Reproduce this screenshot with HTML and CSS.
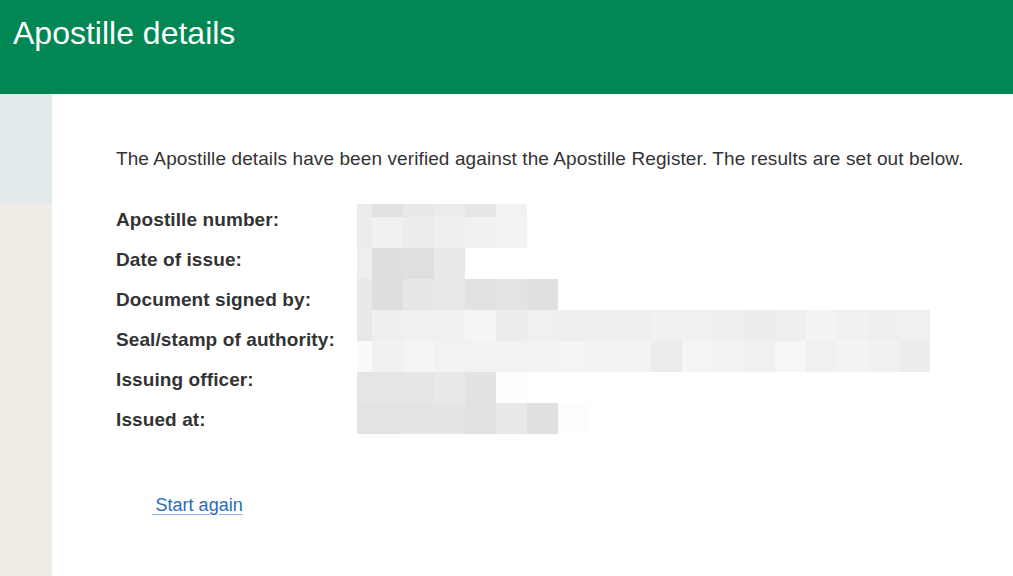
FILE: index.html
```html
<!DOCTYPE html>
<html lang="en">
<head>
<meta charset="utf-8">
<title>Apostille details</title>
<link rel="stylesheet" href="styles.css">
</head>
<body>
<header class="site-header">
  <h1 class="site-title">Apostille details</h1>
</header>
<div class="page">
  <aside class="sidebar">
    <div class="sidebar-top"></div>
  </aside>
  <main class="main">
    <p class="intro">The Apostille details have been verified against the Apostille Register. The results are set out below.</p>
    <dl class="details">
      <dt>Apostille number:</dt><dd></dd>
      <dt>Date of issue:</dt><dd></dd>
      <dt>Document signed by:</dt><dd></dd>
      <dt>Seal/stamp of authority:</dt><dd></dd>
      <dt>Issuing officer:</dt><dd></dd>
      <dt>Issued at:</dt><dd></dd>
      <svg class="redaction" width="573" height="230" viewBox="0 0 573 230" aria-hidden="true">
        <g>
          <rect x="0" y="0" width="15" height="13" fill="#ececec"/>
          <rect x="15" y="0" width="31" height="13" fill="#e2e2e2"/>
          <rect x="46" y="0" width="31" height="13" fill="#e8e8e8"/>
          <rect x="77" y="0" width="31" height="13" fill="#ececec"/>
          <rect x="108" y="0" width="31" height="13" fill="#e6e6e6"/>
          <rect x="139" y="0" width="31" height="13" fill="#f2f2f2"/>
        </g>
        <g>
          <rect x="0" y="13" width="15" height="31" fill="#ececec"/>
          <rect x="15" y="13" width="31" height="31" fill="#f1f1f1"/>
          <rect x="46" y="13" width="31" height="31" fill="#ececec"/>
          <rect x="77" y="13" width="31" height="31" fill="#efefef"/>
          <rect x="108" y="13" width="31" height="31" fill="#f1f1f1"/>
          <rect x="139" y="13" width="31" height="31" fill="#f3f3f3"/>
        </g>
        <g>
          <rect x="0" y="44" width="15" height="31" fill="#efeeec"/>
          <rect x="15" y="44" width="31" height="31" fill="#dedede"/>
          <rect x="46" y="44" width="31" height="31" fill="#dfdfdf"/>
          <rect x="77" y="44" width="31" height="31" fill="#e9e9e9"/>
        </g>
        <g>
          <rect x="0" y="75" width="15" height="31" fill="#e8e8e8"/>
          <rect x="15" y="75" width="31" height="31" fill="#dedede"/>
          <rect x="46" y="75" width="31" height="31" fill="#e6e6e6"/>
          <rect x="77" y="75" width="31" height="31" fill="#e8e8e6"/>
          <rect x="108" y="75" width="31" height="31" fill="#e2e2e2"/>
          <rect x="139" y="75" width="31" height="31" fill="#e2e4e4"/>
          <rect x="170" y="75" width="31" height="31" fill="#e0e0e0"/>
        </g>
        <g>
          <rect x="0" y="106" width="15" height="31" fill="#e8e8e8"/>
          <rect x="15" y="106" width="31" height="31" fill="#efefef"/>
          <rect x="46" y="106" width="31" height="31" fill="#f0f0f0"/>
          <rect x="77" y="106" width="31" height="31" fill="#f1f1f1"/>
          <rect x="108" y="106" width="31" height="31" fill="#f5f5f5"/>
          <rect x="139" y="106" width="31" height="31" fill="#ececec"/>
          <rect x="170" y="106" width="31" height="31" fill="#eff0f0"/>
          <rect x="201" y="106" width="31" height="31" fill="#eeeeee"/>
          <rect x="232" y="106" width="31" height="31" fill="#eeeeee"/>
          <rect x="263" y="106" width="31" height="31" fill="#efefef"/>
          <rect x="294" y="106" width="31" height="31" fill="#f1f1f1"/>
          <rect x="325" y="106" width="31" height="31" fill="#f1f1f1"/>
          <rect x="356" y="106" width="31" height="31" fill="#efefef"/>
          <rect x="387" y="106" width="31" height="31" fill="#ededed"/>
          <rect x="418" y="106" width="31" height="31" fill="#efefef"/>
          <rect x="449" y="106" width="31" height="31" fill="#f3f3f3"/>
          <rect x="480" y="106" width="31" height="31" fill="#f1f1f1"/>
          <rect x="511" y="106" width="31" height="31" fill="#efefef"/>
          <rect x="542" y="106" width="31" height="31" fill="#f0f0f0"/>
        </g>
        <g>
          <rect x="0" y="137" width="15" height="31" fill="#fafafa"/>
          <rect x="15" y="137" width="31" height="31" fill="#f1f1f1"/>
          <rect x="46" y="137" width="31" height="31" fill="#f5f5f5"/>
          <rect x="77" y="137" width="31" height="31" fill="#f1f2f2"/>
          <rect x="108" y="137" width="31" height="31" fill="#f2f2f2"/>
          <rect x="139" y="137" width="31" height="31" fill="#f2f2f2"/>
          <rect x="170" y="137" width="31" height="31" fill="#f2f3f3"/>
          <rect x="201" y="137" width="31" height="31" fill="#f4f4f4"/>
          <rect x="232" y="137" width="31" height="31" fill="#f3f3f3"/>
          <rect x="263" y="137" width="31" height="31" fill="#f2f3f3"/>
          <rect x="294" y="137" width="31" height="31" fill="#ececec"/>
          <rect x="325" y="137" width="31" height="31" fill="#f5f5f5"/>
          <rect x="356" y="137" width="31" height="31" fill="#f2f2f2"/>
          <rect x="387" y="137" width="31" height="31" fill="#f0f0f0"/>
          <rect x="418" y="137" width="31" height="31" fill="#f6f6f6"/>
          <rect x="449" y="137" width="31" height="31" fill="#f0f0f0"/>
          <rect x="480" y="137" width="31" height="31" fill="#f3f3f3"/>
          <rect x="511" y="137" width="31" height="31" fill="#f1f1f1"/>
          <rect x="542" y="137" width="31" height="31" fill="#ededed"/>
        </g>
        <g>
          <rect x="0" y="168" width="15" height="31" fill="#e5e5e3"/>
          <rect x="15" y="168" width="31" height="31" fill="#e4e6e6"/>
          <rect x="46" y="168" width="31" height="31" fill="#e6e6e6"/>
          <rect x="77" y="168" width="31" height="31" fill="#e9e9e7"/>
          <rect x="108" y="168" width="31" height="31" fill="#e2e2e2"/>
          <rect x="139" y="168" width="31" height="31" fill="#fcfdff"/>
        </g>
        <g>
          <rect x="0" y="199" width="15" height="31" fill="#e3e3e3"/>
          <rect x="15" y="199" width="31" height="31" fill="#e3e3e3"/>
          <rect x="46" y="199" width="31" height="31" fill="#e4e4e4"/>
          <rect x="77" y="199" width="31" height="31" fill="#e4e4e4"/>
          <rect x="108" y="199" width="31" height="31" fill="#e1e1e1"/>
          <rect x="139" y="199" width="31" height="31" fill="#ebe9e7"/>
          <rect x="170" y="199" width="31" height="31" fill="#dfe0e0"/>
          <rect x="201" y="199" width="31" height="31" fill="#fdfdfd"/>
        </g>
      </svg>
    </dl>
    <p class="actions"><a class="start-link" href="#">&thinsp;Start again</a></p>
  </main>
</div>
</body>
</html>
```

FILE: styles.css
```css
html, body {
  margin: 0;
  padding: 0;
  background: #ffffff;
}

body {
  font-family: "Liberation Sans", Arial, sans-serif;
  color: #333333;
}

.site-header {
  background: #008753;
  height: 94px;
  box-sizing: border-box;
  padding: 15px 0 0 13px;
}

.site-title {
  margin: 0;
  font-size: 32px;
  font-weight: normal;
  line-height: 36px;
  color: #ffffff;
}

.page {
  display: flex;
  min-height: 482px;
}

.sidebar {
  width: 52px;
  flex: 0 0 52px;
  background: #efebe5;
}

.sidebar-top {
  height: 110px;
  background: #e2eaec;
}

.main {
  flex: 1;
  padding: 52px 0 0 64px;
}

.intro {
  margin: 0;
  font-size: 19px;
  line-height: 25px;
  letter-spacing: 0.1px;
}

.details {
  position: relative;
  display: grid;
  grid-template-columns: 241px 1fr;
  grid-auto-rows: 40px;
  margin: 29px 0 0 0;
  font-size: 19px;
}

.details dt {
  font-weight: bold;
  line-height: 40px;
  letter-spacing: 0.1px;
}

.details dd {
  margin: 0;
}

.redaction {
  position: absolute;
  left: 241px;
  top: 4px;
  display: block;
}

.actions {
  margin: 53px 0 0 36px;
  font-size: 18px;
  line-height: 24px;
}

.start-link {
  color: #2b6bb8;
  text-decoration: underline;
  text-decoration-color: #8fb3de;
  text-underline-offset: 3px;
}
```
